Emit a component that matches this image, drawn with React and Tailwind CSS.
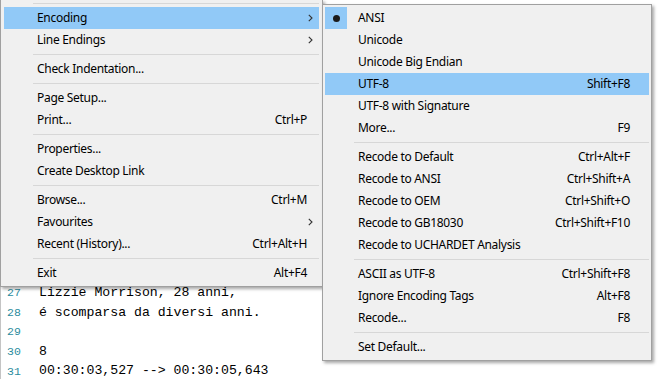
import React from 'react';

const MENU_FONT = { fontFamily: '"Noto Sans", "Open Sans", sans-serif' };

const leftItems = [
    { sep: true },
    { label: 'Encoding', sub: true, active: true },
    { label: 'Line Endings', sub: true },
    { sep: true },
    { label: 'Check Indentation...' },
    { sep: true },
    { label: 'Page Setup...' },
    { label: 'Print...', key: 'Ctrl+P' },
    { sep: true },
    { label: 'Properties...' },
    { label: 'Create Desktop Link' },
    { sep: true },
    { label: 'Browse...', key: 'Ctrl+M' },
    { label: 'Favourites', sub: true },
    { label: 'Recent (History)...', key: 'Ctrl+Alt+H' },
    { sep: true },
    { label: 'Exit', key: 'Alt+F4' },
];

const rightItems = [
    { label: 'ANSI', checked: true },
    { label: 'Unicode' },
    { label: 'Unicode Big Endian' },
    { label: 'UTF-8', key: 'Shift+F8', active: true },
    { label: 'UTF-8 with Signature' },
    { label: 'More...', key: 'F9' },
    { sep: true },
    { label: 'Recode to Default', key: 'Ctrl+Alt+F' },
    { label: 'Recode to ANSI', key: 'Ctrl+Shift+A' },
    { label: 'Recode to OEM', key: 'Ctrl+Shift+O' },
    { label: 'Recode to GB18030', key: 'Ctrl+Shift+F10' },
    { label: 'Recode to UCHARDET Analysis' },
    { sep: true },
    { label: 'ASCII as UTF-8', key: 'Ctrl+Shift+F8' },
    { label: 'Ignore Encoding Tags', key: 'Alt+F8' },
    { label: 'Recode...', key: 'F8' },
    { sep: true },
    { label: 'Set Default...' },
];

const editorLines = [
    { n: 27, text: 'Lizzie Morrison, 28 anni,' },
    { n: 28, text: 'é scomparsa da diversi anni.' },
    { n: 29, text: '' },
    { n: 30, text: '8' },
    { n: 31, text: '00:30:03,527 --> 00:30:05,643' },
];

function Chevron() {
    return (
        <svg width="5" height="8" viewBox="0 0 5 8" className="block">
            <path d="M0.8 0.8 L4 4 L0.8 7.2" fill="none" stroke="#333" strokeWidth="1.1" />
        </svg>
    );
}

function MenuRow({ item, keyClass }) {
    if (item.sep) {
        return (
            <div className="h-[7px] flex items-center pl-[29px]">
                <div className="h-px w-full bg-[#d7d7d7]" />
            </div>
        );
    }
    return (
        <div className={`h-[22px] flex items-center text-[12px] tracking-[-0.3px] text-black ${item.active ? 'bg-[#91c9f7]' : ''}`}>
            <div className="w-[22px] h-[22px] flex items-center justify-center shrink-0">
                {item.checked && (
                    <div className="w-[22px] h-[22px] bg-[#91c9f7] flex items-center justify-center">
                        <div className="w-[7px] h-[7px] rounded-full bg-[#1a1a1a]" />
                    </div>
                )}
            </div>
            <span className="ml-[11px] flex-1 whitespace-nowrap">{item.label}</span>
            {item.key && <span className={`whitespace-nowrap ${keyClass}`}>{item.key}</span>}
            {item.sub && (
                <span className="mr-[6px]">
                    <Chevron />
                </span>
            )}
        </div>
    );
}

export default function App() {
    return (
        <div className="relative w-[660px] h-[379px] overflow-hidden bg-white">
            {/* editor behind the menus */}
            <div className="h-full border-l border-[#c4c4c4] pt-[283px]" style={{ fontFamily: '"Liberation Mono", "DejaVu Sans Mono", monospace' }}>
                {editorLines.map((l) => (
                    <div key={l.n} className="h-[19.6px] flex items-center">
                        <span className="w-[38px] pl-[6px] text-[11.5px] text-[#2b8c9e]">{l.n}</span>
                        <span className="text-[13.2px] text-black whitespace-pre">{l.text}</span>
                    </div>
                ))}
            </div>

            {/* file menu */}
            <div
                className="absolute left-0 top-0 w-[323px] bg-[#f0f0f0] border border-t-0 border-[#a0a0a0] px-[3px] pb-[2px] shadow-[2px_2px_3px_rgba(0,0,0,0.35)]"
                style={MENU_FONT}
            >
                {leftItems.map((it, i) => (
                    <MenuRow key={i} item={it} keyClass="mr-[12px]" />
                ))}
            </div>

            {/* encoding submenu */}
            <div
                className="absolute left-[322px] top-[4px] w-[330px] bg-[#f0f0f0] border border-[#a0a0a0] px-[2px] py-[2px] shadow-[2px_2px_3px_rgba(0,0,0,0.35)]"
                style={MENU_FONT}
            >
                {rightItems.map((it, i) => (
                    <MenuRow key={i} item={it} keyClass="mr-[19px]" />
                ))}
            </div>
        </div>
    );
}
